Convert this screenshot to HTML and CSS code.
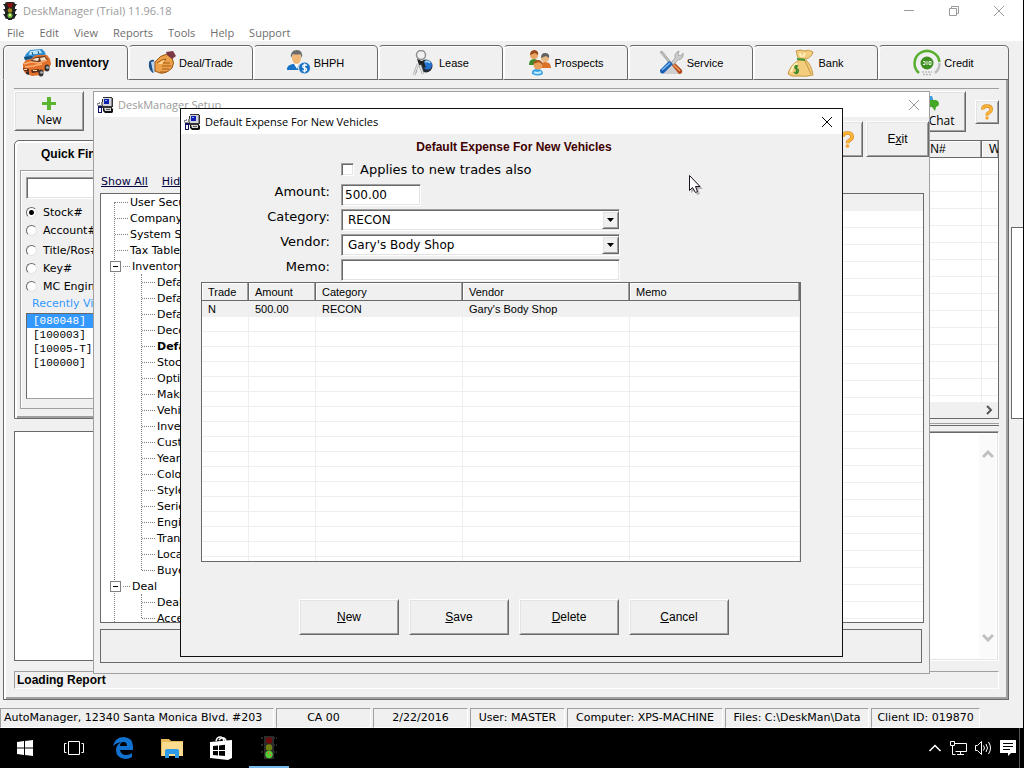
FILE: index.html
```html
<!DOCTYPE html>
<html lang="en">
<head>
  <meta charset="UTF-8">
  <title>DeskManager (Trial) 11.96.18</title>
  <link rel="stylesheet" href="styles.css">
</head>
<body>
  <!-- shared icons -->
  <svg class="defs" width="0" height="0" aria-hidden="true">
    <symbol id="ico-setup" viewBox="0 0 16 16">
      <path d="M6 0h9v1h1v9h-1v1H5V2h1z" fill="#333"/>
      <path d="M6 1h8v8H6z" fill="#d4d4dc"/>
      <path d="M14 1h1v8h-1z" fill="#888"/>
      <path d="M7 2h5v5H7z" fill="#1020b0"/>
      <path d="M8 3h2v1H8z" fill="#7ab0ff"/>
      <path d="M6 11h9l1 1v3l-1 1H8l-2-2z" fill="#111"/>
      <path d="M7 11h7v3H8z" fill="#d8d8d8"/>
      <path d="M9 12h4v1H9z" fill="#555"/>
      <path d="M0 6h2V5h1v2h1V5h2v3L4 9H1L0 8z" fill="#8a8a8a"/>
      <path d="M1 7h3v1H1z" fill="#fff"/>
      <path d="M1 9h4v7H1z" fill="#101060"/>
      <path d="M2 11h2v4H2z" fill="#f4f4ff"/>
    </symbol>
    <symbol id="ico-close" viewBox="0 0 12 12">
      <path d="M1 1l10 10M11 1L1 11" fill="none" stroke="currentColor"/>
    </symbol>
    <symbol id="ico-help" viewBox="0 0 14 18">
      <path d="M2 6Q2 2 7 2t5 4q0 2-3 4-2 1-2 3" fill="none" stroke="#d98a1e" stroke-width="4"/>
      <path d="M2 6Q2 2 7 2t5 4q0 2-3 4-2 1-2 3" fill="none" stroke="#fdb53c" stroke-width="2.6"/>
      <circle cx="7" cy="16" r="2" fill="#f5a42c"/>
    </symbol>
    <symbol id="ico-light" viewBox="0 0 16 18">
      <path d="M1 2h14l-2 3H3zM1 7h14l-2 3H3zM1 12h14l-2 3H3z" fill="#222"/>
      <rect x="3" y="0" width="10" height="17" rx="2" fill="#222"/>
      <path d="M5 1h6v2H5z" fill="#7a1414"/>
      <circle cx="8" cy="3.500" r="2.300" fill="#8c1010"/>
      <circle cx="8" cy="8.500" r="2.300" fill="#a08a20"/>
      <circle cx="8" cy="13.500" r="2.500" fill="#6cc040"/>
      <path d="M7 12h2v2H7z" fill="#e4f080"/>
      <path d="M6 17h4v1H6z" fill="#222"/>
    </symbol>
  </svg>

  <div class="app">
    <header class="titlebar">
      <svg class="app-icon" viewBox="0 0 16 18"><use href="#ico-light"/></svg>
      <span class="title">DeskManager (Trial) 11.96.18</span>
      <div class="winbtns">
        <button type="button" aria-label="Minimize"><svg width="12" height="12" viewBox="0 0 12 12"><path d="M1 5.500h10" stroke="currentColor"/></svg></button>
        <button type="button" aria-label="Restore"><svg width="12" height="12" viewBox="0 0 12 12"><path d="M1.500 3.500h7v7h-7zM3.500 3V1.500h7v7H9" fill="none" stroke="currentColor"/></svg></button>
        <button type="button" aria-label="Close"><svg width="12" height="12"><use href="#ico-close"/></svg></button>
      </div>
    </header>
    <nav class="menubar">
      <a href="#">File</a><a href="#">Edit</a><a href="#">View</a><a href="#">Reports</a><a href="#">Tools</a><a href="#">Help</a><a href="#">Support</a>
    </nav>

    <div class="workspace">
      <main class="panel">
        <div class="tabs">
          <button type="button" class="tab active">
            <svg width="30" height="28" viewBox="0 0 30 28">
              <path d="M2 9l2-4 4-4 12-1 3 3 1 4-2 4-18 1z" fill="#2f8fd0"/>
              <path d="M8 2l10-1 2 3-13 2z" fill="#bfe4f8"/>
              <path d="M2 8l8-1 1 2-8 2z" fill="#14507c"/>
              <path d="M10 3l1 3M16 2l1 3" stroke="#14507c"/>
              <path d="M1 15l3-4 5-1 5-4 11 0 3 4 1 5-2 4-5 3-3 4-9 1-7-3-2-4z" fill="#e0702c"/>
              <path d="M9 11l5-3 9-1 3 4-5 2-11 1z" fill="#6a3a22"/>
              <path d="M10 11l4-2 3 0-1 3zM18 9l5-1 1 3-5 1z" fill="#f7e2cc"/>
              <path d="M2 15l7-2 8 1 8-3M3 18l8-1 9-2" stroke="#ffb070" stroke-width="1.500" fill="none"/>
              <path d="M1 19l6 1 0 3-5-1zM9 21l8-1v3l-7 1z" fill="#5a2a1c"/>
              <path d="M2 20h3v1H2zM11 21h4v1h-4z" fill="#ffe0a8"/>
              <ellipse cx="19" cy="24" rx="2.500" ry="3.500" fill="#333"/><ellipse cx="25" cy="19" rx="2.500" ry="3.500" fill="#333"/>
              <circle cx="19.500" cy="23.500" r="1.300" fill="#bbb"/><circle cx="25.500" cy="18.500" r="1.300" fill="#bbb"/>
              <path d="M4 23h3v3l-3-1z" fill="#333"/>
            </svg>
            <span>Inventory</span>
          </button>
          <button type="button" class="tab">
            <svg width="28" height="24" viewBox="0 0 28 24">
              <path d="M1 11q2-3 5-2l2 10-3 3Q0 19 1 11z" fill="#1d4f86"/>
              <path d="M3 11l4-1 1 10-3 1z" fill="#b9d3ea"/>
              <path d="M7 11q5-7 12-8l5 4q3 5 0 10-6 6-12 5l-5-2z" fill="#eda24a" stroke="#9a5414"/>
              <path d="M9 12q5-4 9-4l-3 4 7 0M14 15h9M14 18h7M12 21h6" stroke="#a55a16" fill="none"/>
              <path d="M10 13q4-4 7-4l-3 4z" fill="#ffd590"/>
              <path d="M18 1l7-1 3 5-4 3-5-4z" fill="#7b3844"/>
            </svg>
            <span>Deal/Trade</span>
          </button>
          <button type="button" class="tab">
            <svg width="24" height="25" viewBox="0 0 24 25">
              <path d="M0 19q0-4 6-5h7q5 1 5 6H0z" fill="#1871c4"/>
              <path d="M7 14h5l-2 5z" fill="#fff"/>
              <ellipse cx="9.500" cy="8" rx="4.500" ry="6" fill="#f0b878"/>
              <path d="M4 8q-1-8 6-8 6 0 5 8l-2-4q-3 1-7 0z" fill="#6b6b6b"/>
              <circle cx="17.500" cy="18" r="6" fill="#1871c4" stroke="#eee"/>
              <path d="M20 15.500q-2-1.500-4 0-1 2 1.500 2.500t2 2q-1.500 2-4 .5M17.500 13.500v9" stroke="#fff" stroke-width="1.300" fill="none"/>
            </svg>
            <span>BHPH</span>
          </button>
          <button type="button" class="tab">
            <svg width="24" height="26" viewBox="0 0 24 26">
              <circle cx="9" cy="5" r="4.500" fill="none" stroke="#909090" stroke-width="1.500"/>
              <circle cx="14" cy="16" r="6.500" fill="#242a34"/>
              <circle cx="15.500" cy="15" r="4.500" fill="#2471d0"/>
              <path d="M13 12q3-2 5 1" stroke="#9cd0ff" stroke-width="2" fill="none"/>
              <path d="M5 9l7 3 2 6-7-3z" fill="#222"/>
              <path d="M6 14L2 25M8 15l3 9M2 21l3 1" stroke="#aaa" stroke-width="2.500"/>
              <path d="M6 14L2 25M8 15l3 9" stroke="#eee"/>
            </svg>
            <span>Lease</span>
          </button>
          <button type="button" class="tab">
            <svg width="24" height="26" viewBox="0 0 24 26">
              <path d="M1 15q0-6 5-6t5 6z" fill="#3d8b2d"/>
              <circle cx="6" cy="5" r="4" fill="#e8a564"/><path d="M2 5q0-5 5-5 4 1 3 5L7 3z" fill="#9a4e20"/>
              <path d="M12 18q0-6 5-6 6 0 6 6z" fill="#dc7228"/>
              <circle cx="17" cy="8" r="4" fill="#e8b884"/><path d="M13 8q0-5 4-5 5 0 4 5l-3-2z" fill="#626262"/>
              <path d="M4 24q-1-5 5-5t6 5q-5 3-11 0z" fill="#3aa3e4"/><path d="M6 22q3 2 7 0" stroke="#c2ebff" stroke-width="2" fill="none"/>
              <circle cx="10" cy="15" r="4.500" fill="#e9a15c"/><path d="M5 14q1-4 5-4t5 5l-4-3z" fill="#a7561c"/>
            </svg>
            <span>Prospects</span>
          </button>
          <button type="button" class="tab">
            <svg width="26" height="26" viewBox="0 0 26 26">
              <path d="M4 24h18l-9-12z" fill="#cfcfcf"/>
              <path d="M2 2l2-1 9 11-2 1z" fill="#bbb" stroke="#888" stroke-width=".5"/>
              <path d="M12 13l3-2 9 9q1 4-3 4z" fill="#b04a1c"/><path d="M15 14l7 7" stroke="#f0a060" stroke-width="1.500"/>
              <path d="M13 13l4-5q-1-5 4-7l-1 4 3 1 2-3q1 6-5 7l-5 5z" fill="#ccc" stroke="#888" stroke-width=".6"/>
              <path d="M2 20l9-9 4 3-9 9q-4 2-4-3z" fill="#1c62b4"/><path d="M4 20l8-7" stroke="#7cbcf4" stroke-width="1.500"/>
            </svg>
            <span>Service</span>
          </button>
          <button type="button" class="tab">
            <svg width="28" height="28" viewBox="0 0 28 28">
              <path d="M11 9L9 2q4-2 8 0 5-2 9 1-1 5-7 7z" fill="#f4ce80" stroke="#c89a48"/>
              <path d="M12 11Q3 16 1 25q3 3 10 2 8 1 15-1-1-9-7-15z" fill="#f3cc7c" stroke="#c89a48"/>
              <path d="M10 14q-5 4-6 9M18 4l-2 4M13 4l1 4" stroke="#fff0be" stroke-width="2" fill="none"/>
              <path d="M10 9l8 1v2l-8-1z" fill="#3f9a36"/>
              <path d="M18 12l6 13" stroke="#c4913e"/>
              <path d="M11 17q-3-1-3 1t2 2 1 3-4 0M9.500 16v9" stroke="#3a8a2c" stroke-width="1.500" fill="none"/>
            </svg>
            <span>Bank</span>
          </button>
          <button type="button" class="tab">
            <svg width="28" height="28" viewBox="0 0 28 28">
              <path d="M6 24A12.500 12.500 0 1 1 26.500 13" fill="none" stroke="#59b030" stroke-width="2.500"/>
              <path d="M26.500 14A12.500 12.500 0 0 1 22 24" fill="none" stroke="#bdbdbd" stroke-width="2.500"/>
              <circle cx="14" cy="14" r="6.500" fill="#3f8f22"/>
              <path d="M10 12.500h2v3h-2M14 12v4M16 12.500h2v3h-2z" stroke="#e9f7e0" fill="none"/>
              <path d="M9 23h10M10 25.500h8" stroke="#bbb" stroke-dasharray="2 1" stroke-width="1.500"/>
            </svg>
            <span>Credit</span>
          </button>
        </div>

        <div class="page">
          <div class="toolbar">
            <button type="button" class="btn tool-new">
              <svg width="16" height="16" viewBox="0 0 16 16"><path d="M6 1h4v5h5v3h-5v5H6V9H1V6h5z" fill="#5cb531"/></svg>
              New
            </button>
            <div class="toolbar-right">
              <button type="button" class="btn tool-chat">
                <svg width="22" height="18" viewBox="0 0 22 18"><path d="M1 1h13l2 6H9v3H7l-3 3v-3H1z" fill="#39a0e0"/><path d="M9 7q0-2 2-2h7q3 1 3 4 0 2-3 3l-1 4-3-4h-3q-2 0-2-2z" fill="#44a826"/></svg>
                Live Chat
              </button>
              <button type="button" class="btn tool-help" aria-label="Help"><svg width="12" height="16"><use href="#ico-help"/></svg></button>
            </div>
          </div>

          <div class="upper">
            <section class="quickfind">
              <h2>Quick Find</h2>
              <div class="qf-box">
                <input type="text" class="field qf-input" aria-label="Quick Find">
                <div class="radios">
                  <label><input type="radio" name="find" checked>Stock#</label>
                  <label><input type="radio" name="find">Account#</label>
                  <label><input type="radio" name="find">Title/Ros#</label>
                  <label><input type="radio" name="find">Key#</label>
                  <label><input type="radio" name="find">MC Engine#</label>
                </div>
                <p class="recent-title">Recently Viewed</p>
                <ul class="recent">
                  <li class="selected">[080048]</li>
                  <li>[100003]</li>
                  <li>[10005-T]</li>
                  <li>[100000]</li>
                </ul>
              </div>
            </section>
            <section class="stock">
              <table class="stock-table">
                <thead>
                  <tr><th></th><th class="col-vin">VIN#</th><th class="col-w">W</th></tr>
                </thead>
                <tbody>
                  <tr><td></td><td></td><td></td></tr>
                </tbody>
              </table>
              <div class="hscroll"><svg width="8" height="10" viewBox="0 0 8 10"><path d="M1 1l4 4-4 4" fill="none" stroke="#555" stroke-width="2"/></svg></div>
            </section>
          </div>

          <div class="splitter"></div>

          <div class="lower">
            <div class="photo"></div>
            <div class="notes field">
              <div class="vscroll">
                <svg width="12" height="9" viewBox="0 0 12 9"><path d="M1 7l5-5 5 5" fill="none" stroke="#c1c1c1" stroke-width="3"/></svg>
                <svg width="12" height="9" viewBox="0 0 12 9"><path d="M1 2l5 5 5-5" fill="none" stroke="#c1c1c1" stroke-width="3"/></svg>
              </div>
            </div>
          </div>
          <div class="loading">Loading Report</div>
        </div>
      </main>
      <aside class="sidestrip"></aside>
    </div>

    <footer class="statusbar">
      <span class="s-company">AutoManager, 12340 Santa Monica Blvd. #203</span>
      <span class="s-mid">CA 00</span>
      <span class="s-mid">2/22/2016</span>
      <span class="s-mid">User: MASTER</span>
      <span class="s-wide">Computer: XPS-MACHINE</span>
      <span class="s-files">Files: C:\DeskMan\Data</span>
      <span class="s-client">Client ID: 019870</span>
    </footer>
  </div>

  <!-- setup window -->
  <section class="window setup">
    <header class="win-title">
      <svg width="16" height="16"><use href="#ico-setup"/></svg>
      <span>DeskManager Setup</span>
      <button type="button" aria-label="Close"><svg width="12" height="12"><use href="#ico-close"/></svg></button>
    </header>
    <div class="setup-tools">
      <button type="button" class="btn setup-help" aria-label="Help"><svg width="13" height="17"><use href="#ico-help"/></svg></button>
      <button type="button" class="btn setup-exit">E<u>x</u>it</button>
    </div>
    <div class="setup-links"><a href="#">Show All</a><a href="#">Hide All</a></div>
    <div class="setup-main">
      <div class="tree">
        <ul>
          <li><div class="node">User Security</div></li>
          <li><div class="node">Company</div></li>
          <li><div class="node">System Setup</div></li>
          <li><div class="node">Tax Tables</div></li>
          <li><div class="node open">Inventory</div>
            <ul>
              <li><div class="node">Default</div></li>
              <li><div class="node">Default</div></li>
              <li><div class="node">Default</div></li>
              <li><div class="node">Decoder</div></li>
              <li><div class="node current">Default</div></li>
              <li><div class="node">Stock</div></li>
              <li><div class="node">Options</div></li>
              <li><div class="node">Makes</div></li>
              <li><div class="node">Vehicle</div></li>
              <li><div class="node">Inventory</div></li>
              <li><div class="node">Custom</div></li>
              <li><div class="node">Years</div></li>
              <li><div class="node">Colors</div></li>
              <li><div class="node">Styles</div></li>
              <li><div class="node">Series</div></li>
              <li><div class="node">Engines</div></li>
              <li><div class="node">Trans</div></li>
              <li><div class="node">Locations</div></li>
              <li><div class="node">Buyers</div></li>
            </ul>
          </li>
          <li><div class="node open">Deal</div>
            <ul>
              <li><div class="node">Deal</div></li>
              <li><div class="node">Accessories</div></li>
            </ul>
          </li>
        </ul>
      </div>
      <div class="setup-list"></div>
    </div>
    <div class="setup-foot"></div>
  </section>

  <!-- default expense window -->
  <section class="window expense">
    <header class="win-title">
      <svg width="16" height="16"><use href="#ico-setup"/></svg>
      <span>Default Expense For New Vehicles</span>
      <button type="button" aria-label="Close"><svg width="12" height="12"><use href="#ico-close"/></svg></button>
    </header>
    <form class="expense-form">
      <h1>Default Expense For New Vehicles</h1>
      <div class="check-row">
        <input type="checkbox" id="trades"><label for="trades">Applies to new trades also</label>
      </div>
      <div class="form-row">
        <label for="amount">Amount:</label>
        <input type="text" class="field short" id="amount" value="500.00">
      </div>
      <div class="form-row">
        <label for="category">Category:</label>
        <div class="field combo">
          <select id="category"><option>RECON</option></select>
          <span class="btn arrow"><svg width="7" height="4" viewBox="0 0 7 4"><path d="M0 0h7L3.500 4z"/></svg></span>
        </div>
      </div>
      <div class="form-row">
        <label for="vendor">Vendor:</label>
        <div class="field combo">
          <select id="vendor"><option>Gary's Body Shop</option></select>
          <span class="btn arrow"><svg width="7" height="4" viewBox="0 0 7 4"><path d="M0 0h7L3.500 4z"/></svg></span>
        </div>
      </div>
      <div class="form-row">
        <label for="memo">Memo:</label>
        <input type="text" class="field long" id="memo">
      </div>
      <div class="expense-grid">
        <table>
          <thead>
            <tr>
              <th class="c-trade">Trade</th>
              <th class="c-amount">Amount</th>
              <th class="c-category">Category</th>
              <th class="c-vendor">Vendor</th>
              <th>Memo</th>
            </tr>
          </thead>
          <tbody>
            <tr class="selected">
              <td>N</td>
              <td>500.00</td>
              <td>RECON</td>
              <td>Gary's Body Shop</td>
              <td></td>
            </tr>
            <tr class="filler"><td></td><td></td><td></td><td></td><td></td></tr>
          </tbody>
        </table>
      </div>
      <div class="actions">
        <button type="button" class="btn"><u>N</u>ew</button>
        <button type="button" class="btn"><u>S</u>ave</button>
        <button type="button" class="btn"><u>D</u>elete</button>
        <button type="button" class="btn"><u>C</u>ancel</button>
      </div>
    </form>
  </section>

  <svg class="cursor" width="16" height="22" viewBox="0 0 16 22">
    <path d="M3 3v16l4-3 2 5 3-1-2-5h5z" fill="#000" opacity=".25"/>
    <path d="M1.500 1.500v15l3-3 3 5 2-1-2-5h4.500z" fill="#fff" stroke="#1a1020"/>
  </svg>

  <footer class="taskbar">
    <button type="button" aria-label="Start">
      <svg width="16" height="16" viewBox="0 0 16 16"><path d="M0 2l7-1v6.500H0zM8 1l8-1v7.500H8zM0 8.500h7V15l-7-1zM8 8.500h8V16l-8-1z" fill="#fff"/></svg>
    </button>
    <button type="button" aria-label="Task View">
      <svg width="20" height="14" viewBox="0 0 20 14"><path d="M4.500.5h11v13h-11zM2.500 2.500h-2v9h2M17.500 2.500h2v9h-2" fill="none" stroke="#fff"/></svg>
    </button>
    <button type="button" aria-label="Edge">
      <svg width="20" height="22" viewBox="0 0 20 22"><path d="M0 9Q2 0 11 0q9 1 9 9v4H7q1 5 6 5 4 0 6-2v4q-3 2-7 2-9-1-9-9 0-5 5-8Q3 6 0 9zm7 0h7q0-4-3.500-4T7 9z" fill="#1272d0"/></svg>
    </button>
    <button type="button" aria-label="File Explorer">
      <svg width="22" height="20" viewBox="0 0 22 20"><path d="M0 1h8l2 2h12v15H0z" fill="#eab95a"/><path d="M1 4h21v14H1z" fill="#fbdc8e"/><path d="M4 20v-7q0-2 2-2h10q2 0 2 2v7h-4v-4H8v4z" fill="#2e9ae8"/></svg>
    </button>
    <button type="button" aria-label="Store">
      <svg width="22" height="24" viewBox="0 0 22 24"><path d="M6 5q1-4 4-4t4 4M9 4q2-3 5-2 2 1 2 4" fill="none" stroke="#fff" stroke-width="1.500"/><path d="M0 6l22-2v18l-4 2-18-2z" fill="#fff"/><path d="M3 10l5-.500V14H3zM9 9.400l6-.6V14H9zM3 15h5v4.500L3 19zM9 15h6v5l-6-.5z" fill="#000"/></svg>
    </button>
    <button type="button" class="running" aria-label="DeskManager">
      <svg width="16" height="23" viewBox="0 0 16 23"><path d="M0 2h16M0 9h16M0 16h16" stroke="#555" stroke-dasharray="2 1"/><path d="M3 0h10v23H3z" fill="#2c2c2c"/><circle cx="8" cy="4.500" r="3.200" fill="#6c0c0c"/><circle cx="8" cy="11.500" r="3.200" fill="#70800e"/><circle cx="8" cy="18.500" r="3.700" fill="#52cc34"/><path d="M7 16h1v2H7zM9 18h1v2H9z" fill="#e46a30"/></svg>
    </button>
    <div class="tray">
      <svg width="14" height="8" viewBox="0 0 14 8"><path d="M1.500 7L7 1.500 12.500 7" fill="none" stroke="#fff" stroke-width="1.500"/></svg>
      <svg width="17" height="15" viewBox="0 0 17 15"><path d="M4.500 2.500h12v8h-11M10.500 10v4M7 13.500h7M.5.500h4v4h-4zM2.500 4v9.500h3" fill="none" stroke="#fff"/></svg>
      <svg width="17" height="14" viewBox="0 0 17 14"><path d="M.5 4.500h2l4-4v13l-4-4h-2zM8.500 4.500q2 2.500 0 5M11 3q3 4 0 8M13.500 1q4 6 0 12" fill="none" stroke="#fff"/></svg>
      <svg width="16" height="16" viewBox="0 0 16 16"><path d="M0 0h16v13h-5l-3 3v-3H0z" fill="#fff"/><path d="M3 3.500h10M3 6.500h10M3 9.500h7" stroke="#000"/></svg>
    </div>
  </footer>
</body>
</html>
```

FILE: styles.css
```css
* { box-sizing: border-box; }
body { margin: 0; height: 100vh; display: flex; flex-direction: column; position: relative; overflow: hidden; background: #000; color: #000; font-family: "DejaVu Sans", Verdana, sans-serif; font-size: 11px; }
button, input, select { font: inherit; color: inherit; margin: 0; padding: 0; }
button { border: 0; background: none; }
ul { list-style: none; margin: 0; padding: 0; }
h1, h2, p { margin: 0; }
svg { display: block; flex: none; }
.defs { position: absolute; }

/* classic 3d controls */
.btn { display: flex; align-items: center; justify-content: center; background: #f0f0f0; border: 1px solid; border-color: #fff #696969 #696969 #fff; box-shadow: inset 1px 1px #e3e3e3, inset -1px -1px #a0a0a0; font-family: "Liberation Sans", Arial, sans-serif; font-size: 12px; }
.field { background: #fff; border: 1px solid; border-color: #a0a0a0 #fff #fff #a0a0a0; box-shadow: inset 1px 1px #696969, inset -1px -1px #e3e3e3; border-radius: 0; outline: 0; }

/* main window */
.app { flex: 1; display: flex; flex-direction: column; background: #f0f0f0; margin-right: 1px; min-height: 0; }
.titlebar { display: flex; align-items: center; height: 22px; background: #fff; padding-left: 2px; color: #9a9a9a; }
.app-icon { width: 16px; height: 18px; }
.title { margin-left: 5px; font-family: "Open Sans", "Noto Sans", sans-serif; font-size: 11px; line-height: 22px; }
.winbtns { margin-left: auto; display: flex; gap: 33px; padding-right: 18px; }
.menubar { display: flex; gap: 15px; height: 19px; background: #fff; padding-left: 7px; font-family: "Open Sans", "Noto Sans", sans-serif; font-size: 11px; line-height: 22px; }
.menubar a { color: #6d6d6d; text-decoration: none; }
.workspace { flex: 1; display: flex; min-height: 0; padding: 4px 0 7px 3px; }
.panel { flex: 1; display: flex; flex-direction: column; min-width: 0; }

.tabs { display: flex; height: 35px; }
.tab { flex: 0 0 125px; display: flex; align-items: center; justify-content: center; gap: 3px; border: 1px solid #696969; border-left-color: #fff; border-radius: 5px 5px 0 0; background: #f0f0f0; box-shadow: inset 1px 1px #fff; font-family: "Liberation Sans", Arial, sans-serif; font-size: 11px; }
.tab:last-child { flex: 1; }
.tab.active { border-left-color: #696969; border-bottom-color: #f0f0f0; font-size: 12px; font-weight: bold; }

.page { flex: 1; display: flex; flex-direction: column; min-height: 0; border: 1px solid #696969; border-top: 0; box-shadow: inset 2px 0 #fff, inset -2px -2px #a0a0a0; padding: 8px 9px 10px 10px; }
.toolbar { display: flex; justify-content: space-between; align-items: flex-start; height: 52px; border-top: 1px solid #a0a0a0; padding-top: 2px; }
.tool-new, .tool-chat { flex-direction: column; font-family: "Open Sans", "Noto Sans", sans-serif; line-height: 15px; }
.tool-new { width: 70px; height: 40px; }
.tool-chat { width: 74px; height: 41px; }
.toolbar-right { display: flex; align-items: center; gap: 9px; }
.tool-help { width: 24px; height: 24px; }

.upper { display: flex; gap: 8px; height: 279px; }
.quickfind { width: 220px; border: 1px solid #696969; border-radius: 5px 0 0 0; box-shadow: inset 2px 2px #fff, inset 0 -2px #a0a0a0; padding: 0 5px 9px; display: flex; flex-direction: column; }
.quickfind h2 { padding-left: 21px; font: bold 12px/26px "Liberation Sans", Arial, sans-serif; flex: none; height: 29px; }
.qf-box { flex: 1; display: flex; flex-direction: column; border: 1px solid #a0a0a0; box-shadow: inset 1px 1px #fff; padding: 6px 5px 9px; }
.qf-input { width: 100%; height: 22px; flex: none; }
.radios { padding-top: 4px; }
.radios label { display: flex; align-items: center; gap: 6px; height: 18px; }
.radios label:nth-child(3) { margin-top: 2px; }
.radios input { appearance: none; width: 11px; height: 11px; border: 1px solid; border-color: #696969 #e3e3e3 #e3e3e3 #696969; border-radius: 50%; background: #fff; }
.radios input:checked { background: radial-gradient(circle, #000 2px, #fff 3px); }
.recent-title { padding-left: 6px; line-height: 18px; color: #3399ff; }
.recent { flex: 1; border: 1px solid; border-color: #696969 #e3e3e3 #a0a0a0 #696969; background: #fff; font-family: "Liberation Mono", "Courier New", monospace; line-height: 14px; }
.recent li { padding-left: 6px; }
.recent .selected { background: #3399ff; color: #fff; }

.stock { flex: 1; display: flex; flex-direction: column; border: 1px solid #696969; background: #fff; overflow: hidden; }
.stock-table { width: 100%; flex: 1; display: flex; flex-direction: column; }
.stock-table tr { display: flex; height: 100%; }
.stock-table tbody { flex: 1; background: repeating-linear-gradient(#fff 0 16px, #eee 16px 17px); }
.stock-table th, .stock-table td { flex: 1; padding: 0; text-align: left; }
.stock-table th { height: 17px; padding-left: 5px; background: #f0f0f0; border-right: 1px solid #696969; border-bottom: 1px solid #696969; box-shadow: inset -1px 0 #a0a0a0, inset 1px 1px #fff; font: 12px/17px "Liberation Sans", Arial, sans-serif; }
.stock-table td { border-right: 1px solid #eee; }
.stock-table .col-vin, .stock-table td:nth-child(2) { flex: 0 0 68px; }
.stock-table .col-w, .stock-table td:nth-child(3) { flex: 0 0 16px; min-width: 0; padding-left: 7px; border-right: 0; }
.hscroll { display: flex; align-items: center; justify-content: flex-end; height: 16px; background: #f0f0f0; padding-right: 4px; }

.splitter { height: 3px; margin: 4px 0 5px 228px; border-top: 1px solid #a0a0a0; border-bottom: 1px solid #696969; }
.lower { flex: 1; display: flex; gap: 8px; min-height: 0; }
.photo { width: 220px; border: 1px solid #696969; background: #fff; }
.notes { flex: 1; display: flex; justify-content: flex-end; padding: 2px; }
.vscroll { width: 17px; display: flex; flex-direction: column; align-items: center; justify-content: space-between; padding: 16px 0; background: #fafafa; }
.loading { margin-top: 10px; height: 18px; padding-left: 2px; border: 1px solid; border-color: #a0a0a0 #fff #fff #a0a0a0; font: bold 12px/16px "Liberation Sans", Arial, sans-serif; }
.sidestrip { width: 12px; height: 192px; margin: 182px 0 0 2px; border: 1px solid #696969; border-right: 0; background: #fff; }

.statusbar { display: flex; gap: 2px; height: 21px; padding-top: 1px; white-space: nowrap; }
.statusbar span { border: 1px solid; border-color: #a0a0a0 #fff #fff #a0a0a0; line-height: 18px; text-align: center; }
.statusbar .s-company { width: 274px; padding-left: 3px; text-align: left; }
.s-mid { width: 95px; }
.s-wide { width: 156px; }
.s-files { width: 144px; }
.s-client { width: 109px; }

/* floating windows */
.window { position: absolute; display: flex; flex-direction: column; background: #f0f0f0; }
.win-title { display: flex; align-items: center; height: 25px; flex: none; padding: 0 9px 0 3px; background: #fff; font-family: "Open Sans", "Noto Sans", sans-serif; font-size: 11px; }
.win-title span { margin-left: 5px; }
.win-title button { margin-left: auto; }

.setup { top: 91px; right: 94px; bottom: 94px; left: 93px; border: 1px solid #a0a0a0; padding-bottom: 10px; }
.setup .win-title { color: #9a9a9a; }
.setup-tools { display: flex; justify-content: flex-end; gap: 3px; padding-top: 4px; }
.setup-help { width: 32px; height: 36px; }
.setup-exit { width: 63px; height: 36px; }
.setup-links { display: flex; gap: 14px; padding: 17px 0 3px 7px; line-height: 16px; }
.setup-links a { color: #000040; }
.setup-main { flex: 1; display: flex; gap: 10px; min-height: 0; padding: 0 5px 0 6px; }
.tree { width: 300px; border: 1px solid #696969; background: #fff; overflow: hidden; }
.tree ul { display: flex; flex-direction: column; margin: 8px 0 0 13px; border-left: 1px dotted #808080; }
.tree li:first-child { margin-top: -8px; }
.tree ul ul { margin: 0 0 8px 26px; }
.tree ul ul li:first-child { margin-top: 0; }
.tree ul ul li:last-child { margin-bottom: -8px; }
.node { display: flex; align-items: center; gap: 2px; height: 16px; white-space: nowrap; }
.node::before { content: ""; width: 13px; border-top: 1px dotted #808080; }
.node.open::before { order: -2; width: 9px; height: 9px; margin-left: -5px; border: 1px solid #808080; background: linear-gradient(#000, #000) center / 5px 1px no-repeat #fff; }
.node.open::after { content: ""; order: -1; width: 7px; border-top: 1px dotted #808080; }
.node.current { font-weight: bold; }
.setup-list { flex: 1; border: 1px solid #696969; background: linear-gradient(#f0f0f0, #f0f0f0) 0 0 / 100% 17px no-repeat, repeating-linear-gradient(#fff 0 16px, #eee 16px 17px); }
.setup-foot { height: 34px; margin: 6px 7px 0 6px; border: 1px solid #696969; }

.expense { top: 108px; right: 181px; bottom: 111px; left: 180px; border: 1px solid #101010; }
.expense-form { flex: 1; display: flex; flex-direction: column; min-height: 0; padding: 5px 41px 21px 20px; font-size: 12px; }
.expense-form h1 { margin-left: 26px; text-align: center; color: #400000; font: bold 12px/16px "Liberation Sans", Arial, sans-serif; }
.check-row { display: flex; align-items: center; gap: 6px; height: 16px; margin: 6px 0 7px 140px; font-size: 13px; }
.check-row input { appearance: none; width: 13px; height: 13px; background: #fff; border: 1px solid; border-color: #a0a0a0 #fff #fff #a0a0a0; box-shadow: inset 1px 1px #696969, inset -1px -1px #e3e3e3; }
.form-row { display: flex; gap: 11px; height: 22px; margin-bottom: 3px; }
.form-row label { width: 129px; text-align: right; font-size: 13px; line-height: 16px; }
.form-row .short { width: 80px; padding-left: 3px; }
.form-row .long, .combo { width: 279px; }
.combo { display: flex; padding: 1px 0 1px 1px; }
.combo select { flex: 1; appearance: none; border: 0; border-radius: 0; background: none; padding-left: 5px; outline: 0; }
.arrow { width: 17px; }
.expense-grid { flex: 1; min-height: 0; margin-top: -2px; border: 1px solid #696969; background: #fff; overflow: hidden; }
.expense-grid table { width: 100%; height: 100%; table-layout: fixed; border-spacing: 0; font: 11px/14px "Liberation Sans", Arial, sans-serif; }
.expense-grid th { height: 18px; padding: 0 0 0 6px; text-align: left; font-weight: normal; background: #f0f0f0; border-right: 1px solid #696969; border-bottom: 1px solid #696969; box-shadow: inset -1px 0 #a0a0a0, inset 1px 1px #fff; }
.expense-grid td { padding: 0 0 0 6px; border-right: 1px solid #eee; }
.expense-grid .selected td { height: 16px; background: #f0f0f0; }
.expense-grid .filler td { background: repeating-linear-gradient(#fff 0 14px, #eee 14px 15px); }
.c-trade { width: 47px; }
.c-amount { width: 67px; }
.c-category { width: 147px; }
.c-vendor { width: 167px; }
.actions { display: flex; justify-content: center; gap: 10px; margin: 37px 0 0 26px; }
.actions .btn { width: 100px; height: 36px; }

.cursor { position: absolute; top: 174px; left: 688px; }

/* taskbar */
.taskbar { display: flex; height: 40px; flex: none; background: #000; }
.taskbar button { width: 49px; display: flex; align-items: center; justify-content: center; }
.taskbar .running { width: 40px; margin-left: 4px; border-bottom: 2px solid #76b9ed; }
.tray { display: flex; align-items: center; gap: 8px; margin-left: auto; padding-right: 3px; margin-right: 4px; border-right: 1px solid #555; }
```
